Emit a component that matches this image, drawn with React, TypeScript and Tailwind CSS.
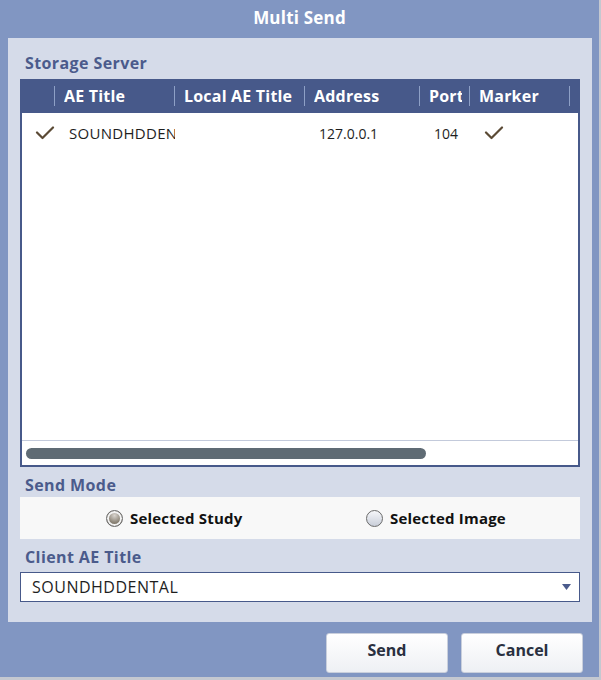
const cols = [
  { label: 'AE Title', w: 120 },
  { label: 'Local AE Title', w: 130 },
  { label: 'Address', w: 115 },
  { label: 'Port', w: 50 },
  { label: 'Marker', w: 100 },
];

const CheckMark = () => (
  <svg width="20" height="14" viewBox="0 0 20 14" className="text-[#5b4a35]">
    <path d="M2 6.5 L7.5 12 L18 1.5" fill="none" stroke="currentColor" strokeWidth="2.2" strokeLinecap="round" strokeLinejoin="round" />
  </svg>
);

const Radio = ({ on }: { on: boolean }) => (
  <span
    className={`inline-block w-[17px] h-[17px] rounded-full border border-[#6b6b6b] ${
      on
        ? 'bg-[radial-gradient(circle_at_50%_30%,#d8d4ce_0%,#8a8275_55%,#6d665c_100%)] shadow-[inset_0_0_0_2px_#f2f2f2]'
        : 'bg-[linear-gradient(#f6f7fa,#c9ced9)]'
    }`}
  />
);

const Section = ({ children }: { children: React.ReactNode }) => (
  <div className="text-[16px] font-bold tracking-[0.4px] text-[#4b5b8c] pl-[5px] leading-none">{children}</div>
);

export default function App() {
  return (
    <div className="w-[601px] h-[680px] bg-[#c4c8d0] font-['Open_Sans',sans-serif]">
      <div className="w-[599px] h-[677px] bg-[#8196c2] flex flex-col">
        <div className="h-[38px] flex items-start pt-[5px] justify-center text-white font-bold text-[17px] tracking-[0.2px]">
          Multi Send
        </div>

        <div className="mx-[8px] w-[584px] h-[584px] bg-[#d5dbe9] px-[12px] pt-[17px] flex flex-col">
          <Section>Storage Server</Section>

          <div className="mt-[8px] h-[388px] border-2 border-[#47598a] bg-white flex flex-col">
            <div className="h-[32px] bg-[#47598a] flex items-center text-white font-bold text-[16px] tracking-[0.2px] shrink-0 pb-[2px]">
              <div className="w-[33px] h-[20px] border-r border-[#8ea0c6]" />
              {cols.map((c) => (
                <div
                  key={c.label}
                  className="h-[20px] flex items-center pl-[9px] pr-[7px] border-r border-[#8ea0c6]"
                  style={{ width: c.w }}
                >
                  <span className="block overflow-hidden whitespace-nowrap">{c.label}</span>
                </div>
              ))}
            </div>

            <div className="flex-1 flex flex-col">
              <div className="h-[40px] flex items-center text-[14px] text-[#1e1e1e]">
                <div className="w-[33px] flex justify-end">
                  <CheckMark />
                </div>
                <div className="w-[120px] pl-[14px] text-[15px] tracking-[0.3px] overflow-hidden whitespace-nowrap">SOUNDHDDENTAL</div>
                <div className="w-[130px]" />
                <div className="w-[115px] pl-[14px]">127.0.0.1</div>
                <div className="w-[50px] pl-[14px]">104</div>
                <div className="w-[100px] pl-[14px]">
                  <CheckMark />
                </div>
              </div>
              <div className="flex-1" />
              <div className="h-[25px] border-t border-[#c3cadb] flex items-center pl-[4px]">
                <div className="w-[400px] h-[11px] rounded-full bg-[#5f6b74]" />
              </div>
            </div>
          </div>

          <div className="mt-[10px]">
            <Section>Send Mode</Section>
          </div>

          <div className="mt-[4px] h-[42px] bg-[#f8f8f8] flex items-center text-[15px] tracking-[0.2px] font-bold text-[#111]">
            <div className="w-[280px] flex items-center pl-[86px] gap-[7px]">
              <Radio on />
              Selected Study
            </div>
            <div className="flex items-center pl-[66px] gap-[7px]">
              <Radio on={false} />
              Selected Image
            </div>
          </div>

          <div className="mt-[10px]">
            <Section>Client AE Title</Section>
          </div>

          <div className="mt-[7px] h-[30px] bg-white border border-[#47598a] flex items-center justify-between pl-[11px] pr-[8px] text-[16px] tracking-[0.5px] text-[#1e1e1e]">
            <span>SOUNDHDDENTAL</span>
            <svg width="9" height="6" viewBox="0 0 9 6">
              <path d="M0 0 H9 L4.5 6 Z" fill="#4b5b8c" />
            </svg>
          </div>
        </div>

        <div className="flex justify-end gap-[13px] pr-[16px] pt-[11px]">
          {['Send', 'Cancel'].map((t) => (
            <button
              key={t}
              className="w-[122px] h-[40px] pb-[6px] rounded-[3px] bg-[linear-gradient(#ffffff,#eef0f4)] border border-[#c9cfdc] text-[#2a3040] font-bold text-[16px]"
            >
              {t}
            </button>
          ))}
        </div>
      </div>
    </div>
  );
}
